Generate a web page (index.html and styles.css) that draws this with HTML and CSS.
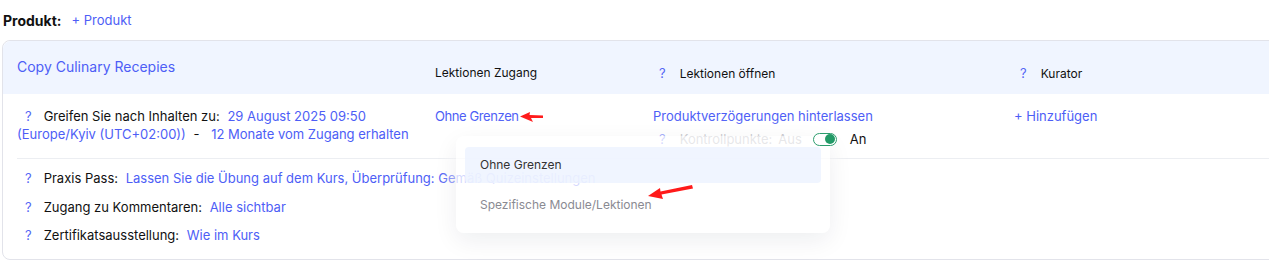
FILE: index.html
```html
<!DOCTYPE html>
<html lang="de">
<head>
  <meta charset="UTF-8">
  <meta name="viewport" content="width=device-width, initial-scale=1.0">
  <title>Produkt</title>
  <link rel="stylesheet" href="styles.css">
</head>
<body>
  <div class="page">
    <div class="product-line">
      <span class="product-label">Produkt:</span>
      <a class="link" href="#">+ Produkt</a>
    </div>

    <div class="card">
      <!-- Header -->
      <div class="card-head">
        <div class="card-title">Copy Culinary Recepies</div>
        <div class="col-label">Lektionen Zugang</div>
        <div class="col-label"><span class="q">?</span>Lektionen öffnen</div>
        <div class="col-label"><span class="q">?</span>Kurator</div>
      </div>

      <!-- Main row -->
      <div class="card-row">
        <div class="cell">
          <span class="q q-first">?</span><span class="text">Greifen Sie nach Inhalten zu:</span>
          <a class="link" href="#">29 August 2025 09:50</a>
          <a class="link" href="#">(Europe/Kyiv (UTC+02:00))</a>
          <span class="text dash">-</span>
          <a class="link" href="#">12 Monate vom Zugang erhalten</a>
        </div>

        <div class="cell access">
          <a class="link narrow" href="#">Ohne Grenzen</a>
          <svg class="arrow-one" width="24" height="12" viewBox="0 0 24 12">
            <path d="M0 5.5 L10 1 L9.5 4 L23 4.5 L23 7 L11 7 L13 11 Z" fill="#ff1a1a"/>
          </svg>

          <div class="dropdown">
            <div class="dropdown-item active">Ohne Grenzen</div>
            <div class="dropdown-item">Spezifische Module/Lektionen</div>
            <svg class="arrow-two" width="46" height="16" viewBox="0 0 46 16">
              <path d="M0 12 L12 4 L12.5 7.5 L44 1 L45 4.5 L13.5 10.5 L15 15 Z" fill="#ff1a1a"/>
            </svg>
          </div>
        </div>

        <div class="cell">
          <a class="link" href="#">Produktverzögerungen hinterlassen</a>
          <div class="checkpoints">
            <span class="q">?</span>
            <span class="muted">Kontrollpunkte:</span>
            <span class="muted">Aus</span>
            <span class="toggle"><span class="knob"></span></span>
            <span class="text">An</span>
          </div>
        </div>

        <div class="cell">
          <a class="link" href="#">+ Hinzufügen</a>
        </div>
      </div>

      <!-- Settings -->
      <div class="settings">
        <div class="setting">
          <span class="q">?</span><span class="text">Praxis Pass:</span>
          <a class="link" href="#">Lassen Sie die Übung auf dem Kurs, Überprüfung: Gemäß Quizeinstellungen</a>
        </div>
        <div class="setting">
          <span class="q">?</span><span class="text">Zugang zu Kommentaren:</span>
          <a class="link" href="#">Alle sichtbar</a>
        </div>
        <div class="setting">
          <span class="q">?</span><span class="text">Zertifikatsausstellung:</span>
          <a class="link" href="#">Wie im Kurs</a>
        </div>
      </div>
    </div>
  </div>
</body>
</html>
```

FILE: styles.css
```css
body {
    margin: 0;
    padding: 0;
    background-color: #fff;
    font-family: Inter, "Noto Sans", Arial, sans-serif;
    font-size: 13px;
    color: #111;
    overflow: hidden;
}

.page {
    padding: 11px 0 0 2px;
}

.link {
    color: #4d5ef6;
    text-decoration: none;
    white-space: nowrap;
}

.q {
    color: #5566f5;
    font-size: 13px;
}

/* Product line */

.product-line {
    display: flex;
    align-items: center;
    gap: 10px;
    height: 18px;
    padding-left: 1px;
    margin-bottom: 11px;
}

.product-label {
    font-weight: 700;
    font-size: 14px;
}

/* Card */

.card {
    border: 1px solid #e2e3ea;
    border-radius: 8px;
    margin-right: -30px;
    background: #fff;
}

.card-head,
.card-row {
    display: grid;
    grid-template-columns: 418px 218px 361px 1fr;
    padding-left: 14px;
}

.card-head {
    height: 53px;
    background-color: #f0f5ff;
    border-radius: 8px 8px 0 0;
}

.card-title {
    padding-top: 16px;
    font-size: 14px;
    line-height: 20px;
    color: #4d5ef6;
}

.col-label {
    padding-top: 24px;
    font-size: 12px;
    line-height: 16px;
}

.col-label .q {
    margin-left: 6px;
    margin-right: 14px;
}

.card-row {
    padding-top: 13px;
    height: 51px;
    line-height: 18px;
}

.cell {
    position: relative;
}

.q-first {
    margin-left: 8px;
    margin-right: 12px;
}

.cell .text + .link {
    margin-left: 4px;
}

.dash {
    margin: 0 4px;
}

.narrow {
    letter-spacing: -0.4px;
}

.arrow-one {
    vertical-align: -2px;
    margin-left: -2px;
}

.checkpoints {
    display: flex;
    align-items: center;
    gap: 6px;
    margin-top: 5px;
}

.checkpoints .q {
    margin-left: 6px;
    margin-right: 8px;
}

.muted {
    color: #9a9aa4;
}

.toggle {
    position: relative;
    z-index: 3;
    width: 22px;
    height: 11px;
    border: 1.5px solid #2d9d6e;
    border-radius: 8px;
    background: #fff;
    margin-left: 5px;
    margin-right: 7px;
}

.knob {
    position: absolute;
    right: 1px;
    top: 0.5px;
    width: 10px;
    height: 10px;
    border-radius: 50%;
    background: #239a67;
}

.checkpoints .text {
    position: relative;
    z-index: 3;
}

/* Dropdown */

.dropdown {
    position: absolute;
    z-index: 2;
    left: 21px;
    top: 29px;
    width: 356px;
    padding: 11px 9px 10px;
    background: rgba(255, 255, 255, 0.76);
    border-radius: 8px;
    box-shadow: 0 8px 24px rgba(20, 30, 60, 0.07), 0 0 12px 8px rgba(255, 255, 255, 0.55);
}

.dropdown-item {
    height: 36px;
    line-height: 36px;
    padding-left: 15px;
    font-size: 12px;
    color: #8a8a92;
    border-radius: 4px;
}

.dropdown-item + .dropdown-item {
    margin-top: 2px;
    height: 38px;
    line-height: 40px;
}

.dropdown-item.active {
    background: rgba(236, 242, 255, 0.8);
    color: #333;
}

.arrow-two {
    position: absolute;
    left: 192px;
    top: 48px;
}

/* Settings */

.settings {
    margin-left: 14px;
    border-top: 1px solid #eceef2;
    padding: 10px 0 15px;
    display: flex;
    flex-direction: column;
    gap: 10.5px;
    line-height: 18px;
}

.setting .q {
    margin-left: 8px;
    margin-right: 12px;
}

.setting .link {
    margin-left: 4px;
}
```
